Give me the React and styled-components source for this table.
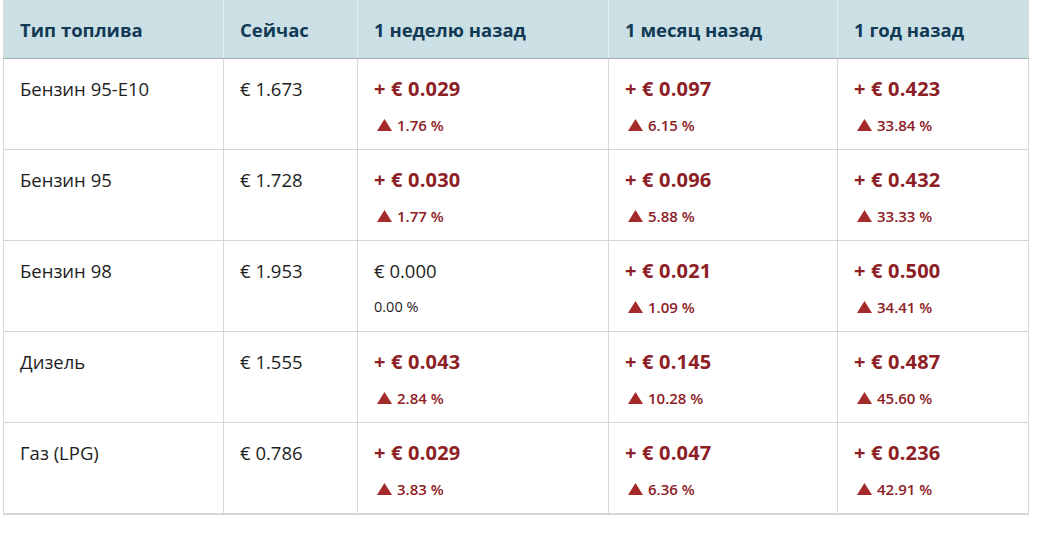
import React from 'react';
import styled, { createGlobalStyle } from 'styled-components';

const rows = [
  {
    fuel: 'Бензин 95-E10',
    now: '€ 1.673',
    changes: [
      { value: '+ € 0.029', pct: '1.76 %', up: true },
      { value: '+ € 0.097', pct: '6.15 %', up: true },
      { value: '+ € 0.423', pct: '33.84 %', up: true },
    ],
  },
  {
    fuel: 'Бензин 95',
    now: '€ 1.728',
    changes: [
      { value: '+ € 0.030', pct: '1.77 %', up: true },
      { value: '+ € 0.096', pct: '5.88 %', up: true },
      { value: '+ € 0.432', pct: '33.33 %', up: true },
    ],
  },
  {
    fuel: 'Бензин 98',
    now: '€ 1.953',
    changes: [
      { value: '€ 0.000', pct: '0.00 %', up: false },
      { value: '+ € 0.021', pct: '1.09 %', up: true },
      { value: '+ € 0.500', pct: '34.41 %', up: true },
    ],
  },
  {
    fuel: 'Дизель',
    now: '€ 1.555',
    changes: [
      { value: '+ € 0.043', pct: '2.84 %', up: true },
      { value: '+ € 0.145', pct: '10.28 %', up: true },
      { value: '+ € 0.487', pct: '45.60 %', up: true },
    ],
  },
  {
    fuel: 'Газ (LPG)',
    now: '€ 0.786',
    changes: [
      { value: '+ € 0.029', pct: '3.83 %', up: true },
      { value: '+ € 0.047', pct: '6.36 %', up: true },
      { value: '+ € 0.236', pct: '42.91 %', up: true },
    ],
  },
];

const columns = [
  { title: 'Тип топлива', width: 220 },
  { title: 'Сейчас', width: 134 },
  { title: '1 неделю назад', width: 251 },
  { title: '1 месяц назад', width: 229 },
  { title: '1 год назад', width: 191 },
];

export default function App() {
  return (
    <>
      <GlobalStyle />
      <Page>
        <Table>
          <colgroup>
            {columns.map((c) => (
              <col key={c.title} width={c.width} />
            ))}
          </colgroup>
          <thead>
            <tr>
              {columns.map((c) => (
                <HeadCell key={c.title}>{c.title}</HeadCell>
              ))}
            </tr>
          </thead>
          <tbody>
            {rows.map((r) => (
              <tr key={r.fuel}>
                <Cell>
                  <Plain>{r.fuel}</Plain>
                </Cell>
                <Cell>
                  <Plain>{r.now}</Plain>
                </Cell>
                {r.changes.map((ch, i) => (
                  <Cell key={i}>
                    <Value $up={ch.up}>{ch.value}</Value>
                    <Percent $up={ch.up}>
                      {ch.up && (
                        <Arrow viewBox="0 0 15 12">
                          <path d="M7.5 0 L15 12 L0 12 Z" fill="#a52a2a" />
                        </Arrow>
                      )}
                      {ch.pct}
                    </Percent>
                  </Cell>
                ))}
              </tr>
            ))}
          </tbody>
        </Table>
      </Page>
    </>
  );
}

const GlobalStyle = createGlobalStyle`
  body {
    margin: 0;
    background: #ffffff;
    font-family: 'Open Sans', 'Liberation Sans', sans-serif;
  }
`;

const Page = styled.div`
  padding-left: 3px;
`;

const Table = styled.table`
  width: 1025px;
  border-collapse: collapse;
  table-layout: fixed;
  border-left: 1px solid #d6d6d6;
  border-right: 1px solid #d6d6d6;
  border-bottom: 2px solid #d6d6d6;
`;

const HeadCell = styled.th`
  height: 58px;
  padding: 0 16px;
  background: #cbe0e5;
  color: #123a55;
  font-size: 18.5px;
  font-weight: 700;
  text-align: left;
  border-left: 1px solid #e6f0f2;
  border-bottom: 1px solid #a3acae;
  &:first-child {
    border-left: none;
  }
`;

const Cell = styled.td`
  height: 91px;
  box-sizing: border-box;
  padding: 17px 16px 0;
  vertical-align: top;
  border: 1px solid #d6d6d6;
`;

const Plain = styled.div`
  font-size: 18.5px;
  color: #1e1e1e;
  line-height: 26px;
`;

const Value = styled.div`
  font-size: ${(p) => (p.$up ? '20px' : '18.5px')};
  font-weight: ${(p) => (p.$up ? 700 : 400)};
  letter-spacing: ${(p) => (p.$up ? '0.2px' : '0')};
  color: ${(p) => (p.$up ? '#8d2025' : '#1e1e1e')};
  line-height: 26px;
`;

const Percent = styled.div`
  display: flex;
  align-items: center;
  gap: 5px;
  margin-top: 13px;
  font-size: ${(p) => (p.$up ? '15px' : '14.5px')};
  font-weight: ${(p) => (p.$up ? 600 : 400)};
  color: ${(p) => (p.$up ? '#8d2025' : '#1e1e1e')};
  line-height: 20px;
  padding-left: ${(p) => (p.$up ? '3px' : '0')};
`;

const Arrow = styled.svg`
  width: 15px;
  height: 12px;
  margin-top: -1px;
`;
